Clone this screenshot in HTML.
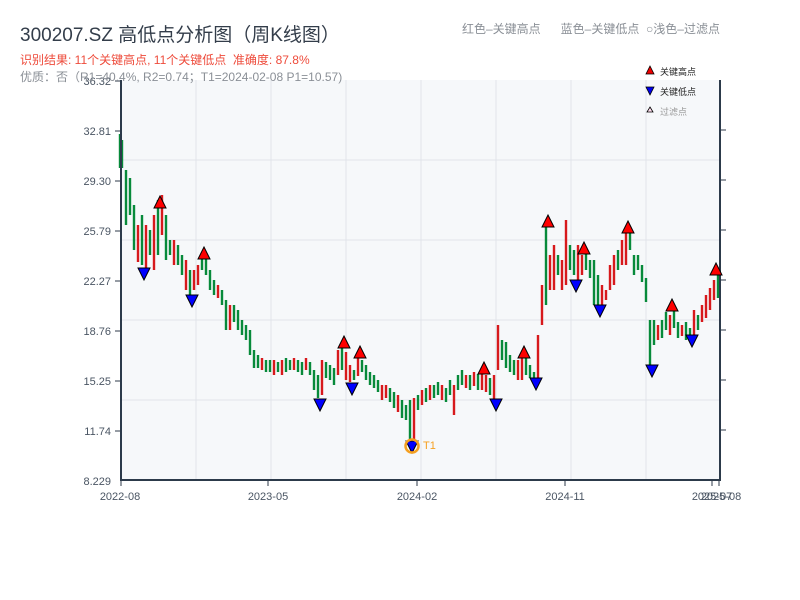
<!DOCTYPE html>
<html><head><meta charset="utf-8"><style>
body{margin:0;width:800px;height:600px;background:#fff;overflow:hidden;font-family:"Liberation Sans","Noto Sans CJK SC",sans-serif;position:relative}
.t{position:absolute;white-space:nowrap}
</style></head><body>
<svg width="800" height="600" style="position:absolute;left:0;top:0" font-family="Liberation Sans, Noto Sans CJK SC, sans-serif">
<rect x="121" y="80" width="599" height="400" fill="#f6f8fa"/>
<g stroke="#e1e4ea" stroke-width="1">
<line x1="121" y1="160" x2="720" y2="160"/><line x1="121" y1="240" x2="720" y2="240"/><line x1="121" y1="320" x2="720" y2="320"/><line x1="121" y1="400" x2="720" y2="400"/>
<line x1="196" y1="80" x2="196" y2="480"/><line x1="271" y1="80" x2="271" y2="480"/><line x1="346" y1="80" x2="346" y2="480"/><line x1="421" y1="80" x2="421" y2="480"/><line x1="496" y1="80" x2="496" y2="480"/><line x1="571" y1="80" x2="571" y2="480"/><line x1="646" y1="80" x2="646" y2="480"/>
</g>
<path stroke="#078a3a" stroke-width="2.4" fill="none" d="M120 134V168M122 140V168M126 170V225M130 178V215M134 205V250M142 215V265M150 230V255M158 200V255M166 215V260M170 240V255M178 245V265M182 255V275M190 270V295M202 255V270M206 255V275M210 270V290M214 280V295M222 290V305M226 300V330M234 305V322M238 310V330M242 320V335M246 325V340M250 330V355M254 350V368M258 355V368M266 360V372M270 360V372M278 362V372M286 358V372M290 360V370M298 360V372M302 362V375M310 362V375M314 370V390M318 375V398M326 362V378M330 365V380M334 368V385M342 348V370M354 370V380M362 360V372M366 365V380M370 372V385M374 375V388M378 380V392M390 388V402M394 392V408M402 400V418M406 405V420M410 400V440M418 395V410M426 388V402M434 385V398M438 382V395M446 388V402M450 380V395M458 375V390M462 370V385M470 375V390M478 374V390M490 378V395M502 340V360M506 342V368M510 355V372M514 360V375M526 355V375M530 365V378M534 372V383M546 225V305M558 255V275M570 245V270M574 250V275M586 248V270M590 260V278M594 260V305M598 275V305M618 250V270M630 230V250M634 255V275M638 255V270M642 265V282M646 278V302M650 320V370M654 320V345M662 320V338M666 312V330M674 310V328M678 322V338M686 322V340M690 328V340M698 315V330M718 275V298"/>
<path stroke="#d7191c" stroke-width="2.4" fill="none" d="M138 225V262M146 225V270M154 215V270M162 195V235M174 240V265M186 260V290M194 270V290M198 265V285M218 285V298M230 305V330M262 358V370M274 360V375M282 360V375M294 358V370M306 358V370M322 360V395M338 350V375M346 352V380M350 365V382M358 358V376M382 385V400M386 385V398M398 395V412M414 398V446M422 390V405M430 385V400M442 385V400M454 385V415M466 375V388M474 372V386M482 372V390M486 375V392M494 375V400M498 325V370M518 360V380M522 355V380M538 335V378M542 285V325M550 255V290M554 245V290M562 260V290M566 220V285M578 245V280M582 255V275M602 285V305M606 290V300M610 265V290M614 255V285M622 240V265M626 230V265M658 325V340M670 315V335M682 325V336M694 310V340M702 305V322M706 295V318M710 288V310M714 280V300"/>
<g stroke="#2c3a4a" stroke-width="2" fill="none">
<line x1="121" y1="80" x2="121" y2="481"/><line x1="120" y1="480" x2="721" y2="480"/><line x1="720" y1="80" x2="720" y2="481"/>
</g>
<g stroke="#2c3a4a" stroke-width="1">
<line x1="115" y1="81" x2="121" y2="81"/><line x1="115" y1="131" x2="121" y2="131"/><line x1="115" y1="181" x2="121" y2="181"/><line x1="115" y1="231" x2="121" y2="231"/><line x1="115" y1="281" x2="121" y2="281"/><line x1="115" y1="331" x2="121" y2="331"/><line x1="115" y1="381" x2="121" y2="381"/><line x1="115" y1="431" x2="121" y2="431"/>
<line x1="720" y1="130" x2="726" y2="130"/><line x1="720" y1="180" x2="726" y2="180"/><line x1="720" y1="230" x2="726" y2="230"/><line x1="720" y1="280" x2="726" y2="280"/><line x1="720" y1="330" x2="726" y2="330"/><line x1="720" y1="380" x2="726" y2="380"/><line x1="720" y1="430" x2="726" y2="430"/>
<line x1="121" y1="480" x2="121" y2="486"/><line x1="268" y1="480" x2="268" y2="486"/><line x1="417" y1="480" x2="417" y2="486"/><line x1="565" y1="480" x2="565" y2="486"/><line x1="712" y1="480" x2="712" y2="486"/><line x1="719" y1="480" x2="719" y2="486"/>
</g>
<g font-size="11" fill="#4a5563" text-anchor="end">
<text x="111" y="85">36.32</text><text x="111" y="135">32.81</text><text x="111" y="185">29.30</text><text x="111" y="235">25.79</text><text x="111" y="285">22.27</text><text x="111" y="335">18.76</text><text x="111" y="385">15.25</text><text x="111" y="435">11.74</text><text x="111" y="485">8.229</text>
</g>
<g font-size="11" fill="#4a5563" text-anchor="middle">
<text x="120" y="500">2022-08</text><text x="268" y="500">2023-05</text><text x="417" y="500">2024-02</text><text x="565" y="500">2024-11</text><text x="712" y="500">2025-07</text><text x="721" y="500">2025-08</text>
</g>
<g stroke="#000" stroke-width="1" fill="#f00">
<polygon points="160,196 166,208 154,208"/><polygon points="204,247 210,259 198,259"/><polygon points="344,336 350,348 338,348"/><polygon points="360,346 366,358 354,358"/><polygon points="484,362 490,374 478,374"/><polygon points="524,346 530,358 518,358"/><polygon points="548,215 554,227 542,227"/><polygon points="584,242 590,254 578,254"/><polygon points="628,221 634,233 622,233"/><polygon points="672,299 678,311 666,311"/><polygon points="716,263 722,275 710,275"/>
</g>
<g stroke="#000" stroke-width="1" fill="#00f">
<polygon points="138,268 150,268 144,280"/><polygon points="186,295 198,295 192,307"/><polygon points="314,399 326,399 320,411"/><polygon points="346,383 358,383 352,395"/><polygon points="406,441 418,441 412,453"/><polygon points="490,399 502,399 496,411"/><polygon points="530,378 542,378 536,390"/><polygon points="570,280 582,280 576,292"/><polygon points="594,305 606,305 600,317"/><polygon points="646,365 658,365 652,377"/><polygon points="686,335 698,335 692,347"/>
</g>
<circle cx="412" cy="446" r="6.5" fill="none" stroke="#f5a020" stroke-width="2.5"/>
<text x="423" y="449" font-size="11" fill="#f5a020">T1</text>
<polygon points="650,66 654,74 646,74" fill="#e00" stroke="#000" stroke-width="0.8"/>
<text x="660" y="75" font-size="9" fill="#222">关键高点</text>
<polygon points="646,87 654,87 650,95" fill="#00e" stroke="#000" stroke-width="0.8"/>
<text x="660" y="95" font-size="9" fill="#222">关键低点</text>
<polygon points="650,107 653,112 647,112" fill="#fde" stroke="#000" stroke-width="0.8"/>
<text x="660" y="115" font-size="9" fill="#999">过滤点</text>
</svg>
<div class="t" style="left:20px;top:20px;font-size:19px;color:#333d4a">300207.SZ 高低点分析图（周K线图）</div>
<div class="t" style="left:20px;top:51px;font-size:12px;color:#ee4b3b">识别结果: 11个关键高点, 11个关键低点&nbsp;&nbsp;准确度: 87.8%</div>
<div class="t" style="left:20px;top:68px;font-size:12px;color:#8a8f96">优质：否（R1=40.4%, R2=0.74；T1=2024-02-08 P1=10.57)</div>
<div class="t" style="left:462px;top:20px;font-size:12px;color:#8a8f96">红色–关键高点&nbsp;&nbsp;&nbsp;&nbsp;&nbsp;&nbsp;蓝色–关键低点&nbsp;&nbsp;○浅色–过滤点</div>
</body></html>
